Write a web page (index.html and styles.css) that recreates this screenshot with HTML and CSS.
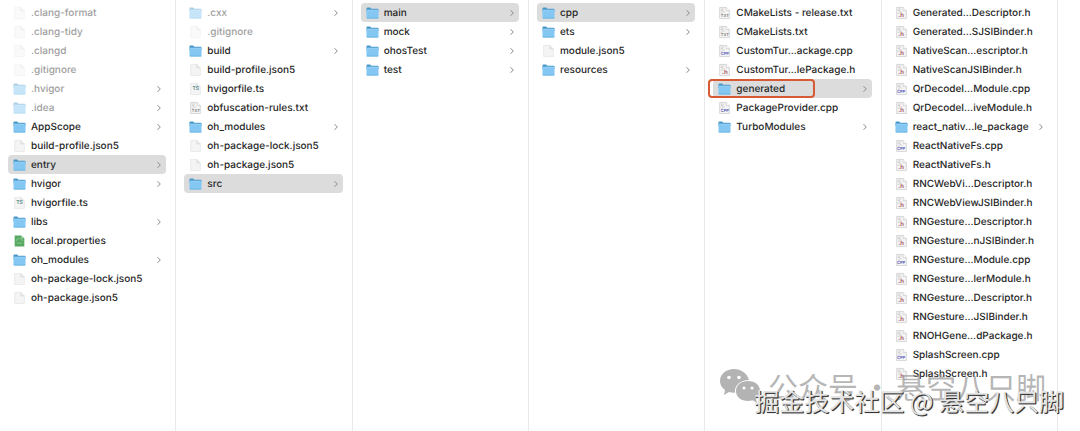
FILE: index.html
```
<!DOCTYPE html>
<html lang="zh-CN">
<head>
  <meta charset="UTF-8" />
  <meta name="viewport" content="width=device-width, initial-scale=1.0" />
  <title>Project Files</title>
  <link rel="stylesheet" href="styles.css">
</head>
<body>
  <!-- Shared icon shapes -->
  <svg class="sprite" xmlns="http://www.w3.org/2000/svg">
    <symbol id="folder" viewBox="0 0 14 14">
      <path d="M0.500 2.200Q0.500 1.200 1.500 1.200h3l1.200 1.200h6.800q1 0 1 1V6h-13z" fill="#4a97c9"/>
      <rect x="0.500" y="3.600" width="13" height="9.200" rx="0.900" fill="#83c7f2"/>
      <path d="M0.600 4.100h12.800" stroke="#a4d8f7" stroke-width="0.600"/>
      <path d="M0.800 12.500h12.400" stroke="#5fabdc" stroke-width="0.700"/>
    </symbol>
    <symbol id="file" viewBox="0 0 14 14">
      <path d="M1.800 1h6.700l3.700 3.700V13H1.800z" fill="#f4f4f4" stroke="#e2e2e2" stroke-width="0.700"/>
      <path d="M8.500 1v3.700h3.700" fill="#e9e9e9" stroke="#d2d2d2" stroke-width="0.700"/>
    </symbol>
    <symbol id="code" viewBox="0 0 14 14">
      <path d="M1.800 1h7l3.400 3.400V13H1.800z" fill="#f5f5f5" stroke="#c4c4c4" stroke-width="0.700"/>
      <path d="M8.800 1v3.400h3.400" fill="#fff" stroke="#c4c4c4" stroke-width="0.700"/>
      <path d="M3 2.800h3.500M3 4.300h2.400M4 5.800h3.500M3 7.300h2" stroke="#c2bcbc" stroke-width="0.700"/>
    </symbol>
    <symbol id="props" viewBox="0 0 14 14">
      <path d="M1.800 1h7l3.400 3V13H1.800z" fill="#57a861"/>
      <path d="M8.800 1v3h3.400" fill="#a9d5ad"/>
      <path d="M3.500 7a3.300 2.600 0 0 1 6.800 0M4 9.200h6" fill="none" stroke="#8fcb96" stroke-width="1"/>
    </symbol>
    <symbol id="chevron" viewBox="0 0 6 8">
      <path d="M1.500 1.200L4.300 4 1.500 6.800" fill="none" stroke="#8b8b8b" stroke-width="1"/>
    </symbol>
  </svg>

  <main class="browser"></main>

  <div class="watermark watermark-account">
    <svg class="wechat" viewBox="0 0 42 36" xmlns="http://www.w3.org/2000/svg">
      <path d="M15 1C7 1 1 6 1 13c0 4 2 7 5 9l-1 5 5-3c2 .6 4 .9 6 .8C15 18 21 12 30 12 28 5 22 1 15 1z"/>
      <path d="M29 13c-7 0-12 4-12 10s5 10 12 10c1.500 0 3-.2 4.500-.7L38 35l-1-4c2.500-2 4-4.500 4-8 0-6-5-10-12-10z"/>
      <g class="eyes"><circle cx="10" cy="9.500" r="1.800"/><circle cx="20" cy="9.500" r="1.800"/><circle cx="25" cy="20" r="1.500"/><circle cx="33" cy="20" r="1.500"/></g>
    </svg>
    <span>公众号</span>
    <span>·</span>
    <span>悬空八只脚</span>
  </div>
  <div class="watermark watermark-site">掘金技术社区 @ 悬空八只脚</div>

  <script src="script.js"></script>
</body>
</html>
```

FILE: styles.css
```
body {
  margin: 0;
  min-height: 100vh;
  position: relative;
  overflow: hidden;
  background: #fff;
  color: #262626;
  font-family: Inter, "Noto Sans CJK SC", sans-serif;
  font-size: 10px;
  font-weight: 500;
  text-rendering: geometricPrecision;
}

.sprite {
  display: none;
}

.browser {
  display: grid;
  grid-template-columns: repeat(6, 1fr);
  min-height: 100vh;
  padding-right: 22px;
}

.column {
  margin: 0;
  padding: 3px 9px 0 8px;
  border-right: 1px solid #e9e9e9;
  list-style: none;
  min-width: 0;
}

.item {
  position: relative;
  display: flex;
  align-items: center;
  gap: 5px;
  height: 19px;
  padding: 0 4px 0 5px;
  border-radius: 4px;
  white-space: nowrap;
}

.item.selected {
  background: #dcdcdc;
}

.item.hidden-file .icon,
.item.hidden-file .name {
  opacity: 0.45;
}

.icon {
  position: relative;
  flex: none;
  width: 13px;
  height: 14px;
}

.icon svg {
  display: block;
  width: 100%;
  height: 100%;
}

.icon-tag {
  position: absolute;
  left: 0;
  right: 0;
  bottom: 2px;
  font-size: 4px;
  font-weight: 600;
  line-height: 5px;
  text-align: center;
}

.tag-h {
  color: #a34a55;
  font-size: 6px;
}

.tag-cpp {
  color: #5353b5;
}

.tag-ts {
  bottom: 4px;
  color: #4f8583;
  font-size: 5px;
}

.tag-txt {
  color: #777;
}

.name {
  flex: 1;
}

.chevron {
  flex: none;
  width: 6px;
  height: 8px;
}

/* Red frame around the generated folder */
.item.marked::after {
  content: '';
  position: absolute;
  top: 0;
  left: -5px;
  width: 103px;
  height: 15px;
  border: 2px solid #d65a35;
  border-radius: 4px;
}

.watermark {
  position: absolute;
  display: flex;
  align-items: center;
  white-space: nowrap;
  font-family: "Noto Sans CJK SC", sans-serif;
  font-weight: 400;
  pointer-events: none;
}

.watermark-account {
  right: 34px;
  bottom: 27px;
  gap: 4px;
  color: rgba(150, 150, 150, 0.7);
  font-size: 30px;
  line-height: 36px;
}

.wechat {
  width: 42px;
  height: 36px;
  margin-right: 3px;
  fill: #b3b3b3;
}

.wechat .eyes {
  fill: #fff;
}

.watermark-site {
  right: 16px;
  bottom: 13px;
  color: #e4e4e4;
  font-size: 25px;
  line-height: 34px;
  white-space: pre;
  text-shadow: 1px 1px 0 #333, 1px 1px 1px #555;
}
```

FILE: script.js
```
const columns = [
  [
    { name: '.clang-format', icon: 'file', hidden: true },
    { name: '.clang-tidy', icon: 'file', hidden: true },
    { name: '.clangd', icon: 'file', hidden: true },
    { name: '.gitignore', icon: 'file', hidden: true },
    { name: '.hvigor', icon: 'folder', hidden: true },
    { name: '.idea', icon: 'folder', hidden: true },
    { name: 'AppScope', icon: 'folder' },
    { name: 'build-profile.json5', icon: 'file' },
    { name: 'entry', icon: 'folder', selected: true },
    { name: 'hvigor', icon: 'folder' },
    { name: 'hvigorfile.ts', icon: 'ts' },
    { name: 'libs', icon: 'folder' },
    { name: 'local.properties', icon: 'props' },
    { name: 'oh_modules', icon: 'folder' },
    { name: 'oh-package-lock.json5', icon: 'file' },
    { name: 'oh-package.json5', icon: 'file' }
  ],
  [
    { name: '.cxx', icon: 'folder', hidden: true },
    { name: '.gitignore', icon: 'file', hidden: true },
    { name: 'build', icon: 'folder' },
    { name: 'build-profile.json5', icon: 'file' },
    { name: 'hvigorfile.ts', icon: 'ts' },
    { name: 'obfuscation-rules.txt', icon: 'txt' },
    { name: 'oh_modules', icon: 'folder' },
    { name: 'oh-package-lock.json5', icon: 'file' },
    { name: 'oh-package.json5', icon: 'file' },
    { name: 'src', icon: 'folder', selected: true }
  ],
  [
    { name: 'main', icon: 'folder', selected: true },
    { name: 'mock', icon: 'folder' },
    { name: 'ohosTest', icon: 'folder' },
    { name: 'test', icon: 'folder' }
  ],
  [
    { name: 'cpp', icon: 'folder', selected: true },
    { name: 'ets', icon: 'folder' },
    { name: 'module.json5', icon: 'file' },
    { name: 'resources', icon: 'folder' }
  ],
  [
    { name: 'CMakeLists - release.txt', icon: 'txt' },
    { name: 'CMakeLists.txt', icon: 'txt' },
    { name: 'CustomTur...ackage.cpp', icon: 'cpp' },
    { name: 'CustomTur...lePackage.h', icon: 'h' },
    { name: 'generated', icon: 'folder', selected: true, marked: true },
    { name: 'PackageProvider.cpp', icon: 'cpp' },
    { name: 'TurboModules', icon: 'folder' }
  ],
  [
    { name: 'Generated...Descriptor.h', icon: 'h' },
    { name: 'Generated...SJSIBinder.h', icon: 'h' },
    { name: 'NativeScan...escriptor.h', icon: 'h' },
    { name: 'NativeScanJSIBinder.h', icon: 'h' },
    { name: 'QrDecodeI...Module.cpp', icon: 'cpp' },
    { name: 'QrDecodeI...iveModule.h', icon: 'h' },
    { name: 'react_nativ...le_package', icon: 'folder' },
    { name: 'ReactNativeFs.cpp', icon: 'cpp' },
    { name: 'ReactNativeFs.h', icon: 'h' },
    { name: 'RNCWebVi...Descriptor.h', icon: 'h' },
    { name: 'RNCWebViewJSIBinder.h', icon: 'h' },
    { name: 'RNGesture...Descriptor.h', icon: 'h' },
    { name: 'RNGesture...nJSIBinder.h', icon: 'h' },
    { name: 'RNGesture...Module.cpp', icon: 'cpp' },
    { name: 'RNGesture...lerModule.h', icon: 'h' },
    { name: 'RNGesture...Descriptor.h', icon: 'h' },
    { name: 'RNGesture...JSIBinder.h', icon: 'h' },
    { name: 'RNOHGene...dPackage.h', icon: 'h' },
    { name: 'SplashScreen.cpp', icon: 'cpp' },
    { name: 'SplashScreen.h', icon: 'h' }
  ]
];

const tags = { ts: 'TS', txt: 'TXT', cpp: 'CPP', h: '.h' };

// Icon markup, file types get a small label
function iconMarkup(icon) {
  const tag = tags[icon];
  const shape = icon === 'ts' ? 'file' : tag ? 'code' : icon;
  const label = tag ? `<span class="icon-tag tag-${icon}">${tag}</span>` : '';
  return `<span class="icon"><svg aria-hidden="true"><use href="#${shape}"/></svg>${label}</span>`;
}

const browser = document.querySelector('.browser');

columns.forEach(items => {
  const list = document.createElement('ul');
  list.className = 'column';

  items.forEach(item => {
    const row = document.createElement('li');
    row.className = 'item';
    if (item.hidden) row.classList.add('hidden-file');
    if (item.selected) row.classList.add('selected');
    if (item.marked) row.classList.add('marked');

    const chevron = item.icon === 'folder' ? '<svg class="chevron"><use href="#chevron"/></svg>' : '';
    row.innerHTML = `${iconMarkup(item.icon)}<span class="name">${item.name}</span>${chevron}`;
    list.appendChild(row);
  });

  browser.appendChild(list);
});
```
